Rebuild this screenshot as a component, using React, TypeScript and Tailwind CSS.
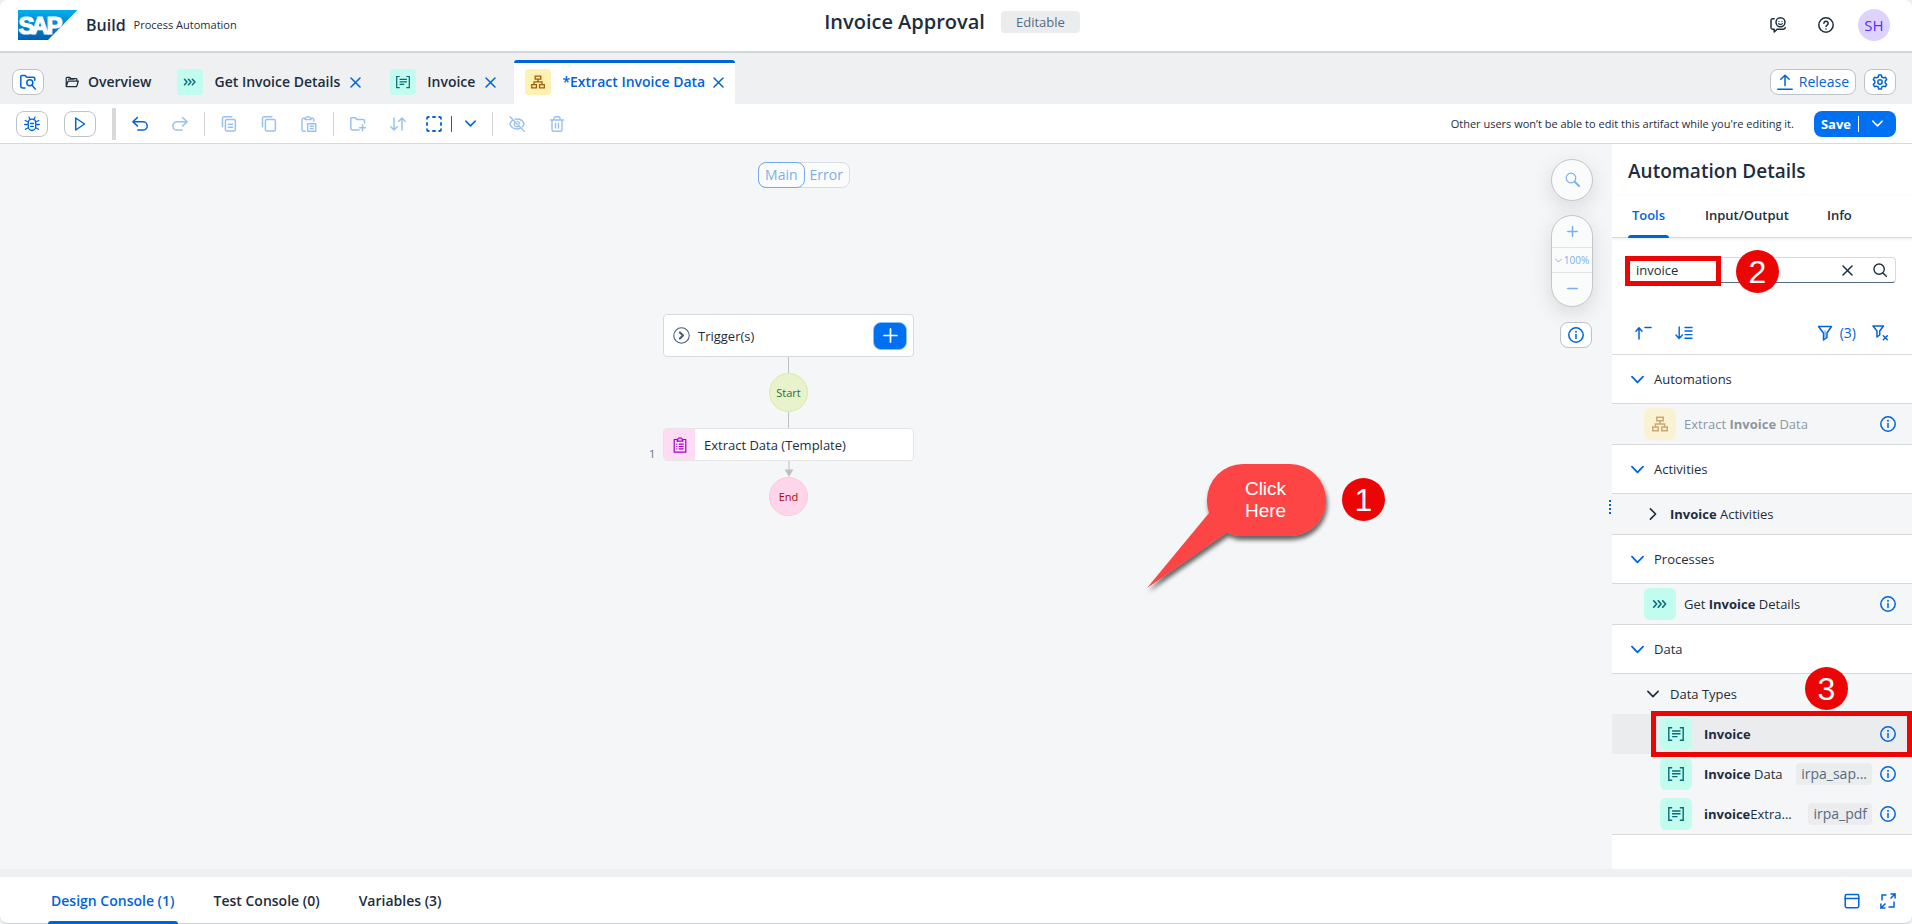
import type { ReactNode } from "react";

type IconProps = { children: ReactNode; className?: string; box?: string; width?: number };

function Icon({ children, className = "size-4", box = "0 0 16 16", width = 1.5 }: IconProps) {
  return (
    <svg
      viewBox={box}
      className={`shrink-0 ${className}`}
      fill="none"
      stroke="currentColor"
      strokeWidth={width}
      strokeLinecap="round"
      strokeLinejoin="round"
      aria-hidden="true"
    >
      {children}
    </svg>
  );
}

const InfoIcon = () => (
  <Icon>
    <circle cx="8" cy="8" r="7.2" />
    <path d="M8 7.6v4" />
    <path d="M8 4.7v.2" strokeWidth="1.8" />
  </Icon>
);

const CloseIcon = () => (
  <Icon className="size-[11px]" box="0 0 11 11">
    <path d="M1 1l9 9M10 1l-9 9" />
  </Icon>
);

const ProcessIcon = () => (
  <Icon width={1.7}>
    <path d="M1.7 4.8L4.6 8l-2.9 3.2M6.2 4.8L9.1 8l-2.9 3.2M10.7 4.8L13.6 8l-2.9 3.2" />
  </Icon>
);

const DataTypeIcon = () => (
  <Icon width={1.4}>
    <path
      d="M3.5 1.7H.8v12.6h2.7M12.5 1.7h2.7v12.6h-2.7M4.8 5h7M4.8 7.8h7M4.8 10.6h4"
      strokeLinecap="square"
      strokeLinejoin="miter"
    />
  </Icon>
);

const HierarchyIcon = () => (
  <Icon width={1.5}>
    <path d="M4.8 1.2h6.4v3.6H4.8zM.8 11h5.4v3.8H.8zM9.8 11h5.4v3.8H9.8zM8 4.8v3M3.4 11V7.9h9.2V11" strokeLinejoin="miter" />
  </Icon>
);

const ChevronDown = ({ className = "size-3" }: { className?: string }) => (
  <Icon className={className} box="0 0 12 12" width={1.6}>
    <path d="M.9 3.4L6 8.6l5.1-5.2" />
  </Icon>
);

function SapLogo() {
  return (
    <svg viewBox="0 0 60 30" className="h-[30px] w-[60px] shrink-0" role="img" aria-label="SAP">
      <defs>
        <linearGradient id="sapBlue" x1="0" y1="0" x2="0" y2="1">
          <stop offset="0" stopColor="#00aeef" />
          <stop offset="1" stopColor="#005fb0" />
        </linearGradient>
      </defs>
      <path d="M0 0h59.5L30 30H0z" fill="url(#sapBlue)" />
      <text
        y="23.5"
        x="0.5 13.2 28.5"
        fill="#fff"
        stroke="#fff"
        strokeWidth="1.2"
        fontSize="24"
        fontWeight="700"
        fontFamily="'Liberation Sans', sans-serif"
      >
        SAP
      </text>
    </svg>
  );
}

const frame = "flex items-center justify-center rounded-lg border border-[#bcc3ca] bg-white text-[#0064d9]";

function Tab({ icon, tint, label, active }: { icon: ReactNode; tint: string; label: string; active?: boolean }) {
  return (
    <div
      className={
        active
          ? "flex items-center gap-2 rounded-t-[3px] border-t-[3px] border-[#0064d9] bg-white px-[11px] pb-[3px] text-[#0064d9]"
          : "flex items-center gap-[10px] px-[11px] text-[#1d2d3e]"
      }
    >
      <button type="button" className="flex items-center gap-[11px] font-semibold">
        <span className={`flex size-[26px] items-center justify-center rounded ${tint}`}>
          <span className="flex *:size-[14px]">{icon}</span>
        </span>
        {label}
      </button>
      <button type="button" aria-label={`Close ${label}`} className="text-[#0064d9]">
        <CloseIcon />
      </button>
    </div>
  );
}

function ToolButton({ label, children, enabled }: { label: string; children: ReactNode; enabled?: boolean }) {
  return (
    <button
      type="button"
      aria-label={label}
      disabled={!enabled}
      className="flex size-4 items-center justify-center text-[#0064d9] disabled:text-[#99c1f0]"
    >
      {children}
    </button>
  );
}

const Divider = () => <span className="h-6 w-px bg-[#d0d3d6]" />;

function Section({ title, children }: { title: string; children: ReactNode }) {
  return (
    <section>
      <button
        type="button"
        className="flex h-[49px] w-full items-center gap-[10px] border-b border-[#d9d9d9] bg-white pl-[19px] text-left"
      >
        <span className="text-[#0064d9]">
          <ChevronDown className="size-[13px]" />
        </span>
        {title}
      </button>
      <div className="border-b border-[#d9d9d9] bg-[#f5f6f7]">{children}</div>
    </section>
  );
}

const InfoButton = ({ label }: { label: string }) => (
  <button type="button" aria-label={`About ${label}`} className="shrink-0 text-[#0064d9]">
    <InfoIcon />
  </button>
);

function DataRow({ name, children, tag, selected }: { name: string; children: ReactNode; tag?: string; selected?: boolean }) {
  return (
    <li className={`flex h-10 items-center gap-2 pr-4 pl-12 ${selected ? "bg-[#eaecee]" : ""}`}>
      <span className="flex size-8 shrink-0 items-center justify-center rounded-md bg-[#c2fcee] text-[#046c7a]">
        <DataTypeIcon />
      </span>
      <span className="ml-1 flex-1 whitespace-nowrap">{children}</span>
      {tag && <span className="shrink-0 rounded bg-[#eaecee] px-[5px] text-[14px] leading-[22px] text-[#556b82]">{tag}</span>}
      <InfoButton label={name} />
    </li>
  );
}

const Marker = ({ n, className }: { n: number; className: string }) => (
  <span
    className={`absolute z-20 flex size-[43px] items-center justify-center rounded-full bg-[#eb0505] pt-px font-['Liberation_Sans',sans-serif] text-[32px] leading-none text-white ${className}`}
  >
    {n}
  </span>
);

export default function App() {
  return (
    <div className="flex min-h-screen flex-col bg-[#eff0f2] font-['Open_Sans','Noto_Sans',sans-serif] text-[13px] leading-5 text-[#1d2d3e]">
      <header className="relative flex h-[53px] items-center justify-between rounded-t-lg border-b-2 border-[#d3d7db] bg-white pr-[22px] pb-px pl-[18px]">
        <div className="flex items-center">
          <SapLogo />
          <span className="ml-2 text-base font-semibold">Build</span>
          <span className="ml-2 text-[11px]">Process Automation</span>
        </div>
        <div className="absolute inset-x-0 top-[11px] flex items-center justify-center gap-4 pr-2">
          <h1 className="text-xl leading-[22px] font-semibold">Invoice Approval</h1>
          <span className="rounded bg-[#eaecee] px-[15px] leading-[22px] text-[#556b82]">Editable</span>
        </div>
        <div className="relative flex items-center">
          <button type="button" aria-label="Give feedback">
            <Icon>
              <path d="M4.2 1.8H2.6A1.6 1.6 0 0 0 1 3.4v7.2a1.6 1.6 0 0 0 1.6 1.6h1.6V15l3-2.800h6.400A1.6 1.6 0 0 0 15.200 10.600" />
              <circle cx="10.5" cy="5.3" r="4.5" />
              <path d="M9 4.500v.1M12 4.500v.1M8.600 6.600c1 1.100 2.800 1.100 3.800 0" strokeWidth="1.2" />
            </Icon>
          </button>
          <button type="button" aria-label="Help" className="ml-8">
            <Icon>
              <circle cx="8" cy="8" r="7.2" />
              <path d="M5.900 6.300a2.100 2.100 0 1 1 3.200 1.800c-.8.500-1.100.8-1.100 1.500M8 12v.1" />
            </Icon>
          </button>
          <button
            type="button"
            aria-label="Account"
            className="ml-6 size-8 rounded-full bg-[#ded3ff] text-[15px] font-medium text-[#552cff]"
          >
            SH
          </button>
        </div>
      </header>

      <div className="flex h-[51px] items-stretch justify-between pr-4 pl-3">
        <div className="flex pt-[7px]">
          <button type="button" aria-label="Browse artifacts" className={`${frame} h-[26px] w-8 self-center`}>
            <Icon>
              <path d="M5 14H2.800A2 2 0 0 1 .8 12V2.600a1 1 0 0 1 1-1h3.400L6.900 3.200h6.300a1.600 1.600 0 0 1 1.600 1.600v1.400" />
              <circle cx="9.8" cy="8.8" r="3" />
              <path d="M12 11.200l3.300 3.800" />
            </Icon>
          </button>
          <nav aria-label="Open artifacts" className="flex gap-[7px] text-[14px]">
            <a href="#overview" className="ml-[21px] flex items-center gap-[9px] pr-2 font-semibold">
              <Icon className="size-[14px]" width={1.4}>
                <path d="M1.400 13.200V3.600a.9.9 0 0 1 .9-.9h3.200l1.400 1.500h5.800a.9.9 0 0 1 .9.9v1.600M1.400 13.200L3.600 6.900h11.700l-2 6.300zM4 4.800h6" />
              </Icon>
              Overview
            </a>
            <Tab icon={<ProcessIcon />} tint="bg-[#c2fcee] text-[#046c7a]" label="Get Invoice Details" />
            <Tab icon={<DataTypeIcon />} tint="bg-[#c2fcee] text-[#046c7a]" label="Invoice" />
            <Tab icon={<HierarchyIcon />} tint="bg-[#fff0b3] text-[#a45d00]" label="*Extract Invoice Data" active />
          </nav>
        </div>
        <div className="flex items-center gap-2 pt-[7px]">
          <button type="button" className={`${frame} h-[26px] gap-[6px] px-[6px] text-[14px]`}>
            <Icon>
              <path d="M8 11.500V1.300M3.800 5.300L8 1.200l4.200 4.100M.8 15.200h14.400" />
            </Icon>
            Release
          </button>
          <button type="button" aria-label="Settings" className={`${frame} h-[26px] w-8`}>
            <Icon>
              <path d="M6.700 1h2.600l.5 2 1.600.9 2-.6 1.300 2.300L13.200 7v2l1.500 1.400-1.300 2.300-2-.6-1.600.9-.5 2H6.700l-.5-2-1.600-.9-2 .6-1.300-2.300L2.800 9V7L1.300 5.600l1.300-2.300 2 .6 1.600-.9z" />
              <circle cx="8" cy="8" r="2.2" />
            </Icon>
          </button>
        </div>
      </div>

      <div className="flex h-10 items-center justify-between border-b border-[#d9d9d9] bg-white px-4">
        <div role="toolbar" aria-label="Automation" className="flex items-center">
          <button type="button" aria-label="Debug" className={`${frame} h-[26px] w-8`}>
            <Icon width={1.3}>
              <path d="M8 3.200c-2.600 0-3.700 1.500-3.700 3.500v3.600c0 2.300 1.600 4.200 3.700 4.200s3.700-1.900 3.700-4.200V6.700c0-2-1.100-3.500-3.700-3.500zM6 3.200L5 1.200M10 3.200l1-2M4.300 6L1.200 4.500M11.700 6l3.100-1.500M4.300 8.500H.7M11.700 8.500h3.600M4.500 11.500l-3 1.800M11.500 11.500l3 1.800M6.600 7.500h2.800M6.600 10.300h2.800" />
            </Icon>
          </button>
          <button type="button" aria-label="Run" className={`${frame} ml-4 h-[26px] w-8`}>
            <Icon>
              <path d="M3.700 2v12l8.800-6z" />
            </Icon>
          </button>
          <span className="ml-4 h-8 w-1 bg-[#d9d9d9]" />
          <div className="ml-4 flex items-center gap-6">
            <ToolButton label="Undo" enabled>
              <Icon>
                <path d="M5.300 1.600L.9 5.700l4.400 4.200M1 5.700h10a3.900 3.900 0 0 1 0 8.400H5.800" />
              </Icon>
            </ToolButton>
            <ToolButton label="Redo">
              <Icon>
                <path d="M10.700 1.600l4.400 4.100-4.400 4.200M15 5.700H5a3.900 3.900 0 0 0 0 8.400h5.200" />
              </Icon>
            </ToolButton>
          </div>
          <div className="ml-4 flex items-center gap-4">
            <Divider />
            <div className="flex items-center gap-6">
              <ToolButton label="Duplicate">
                <Icon>
                  <path d="M1.500 10.500V2.400A1.600 1.600 0 0 1 3.100.8h7.700M6 3.500h6.800a1.600 1.600 0 0 1 1.600 1.600v8.400a1.600 1.600 0 0 1-1.600 1.600H6a1.600 1.600 0 0 1-1.600-1.600V5.100A1.600 1.600 0 0 1 6 3.500zM7.300 8.200h4.300M7.300 11.300h4.300" />
                </Icon>
              </ToolButton>
              <ToolButton label="Copy">
                <Icon>
                  <path d="M1.500 10.500V2.400A1.600 1.600 0 0 1 3.100.8h7.700M6 3.500h6.800a1.600 1.600 0 0 1 1.600 1.600v8.400a1.600 1.600 0 0 1-1.600 1.600H6a1.600 1.600 0 0 1-1.600-1.600V5.100A1.600 1.600 0 0 1 6 3.500z" />
                </Icon>
              </ToolButton>
              <ToolButton label="Paste">
                <Icon width={1.4}>
                  <path d="M4.200 15.200H2.500A1.500 1.500 0 0 1 1 13.700V3.800a1.500 1.500 0 0 1 1.500-1.500H4M9.800 2.300h1.500a1.500 1.500 0 0 1 1.500 1.500v1.400M4 3.600h6L9.400 2A2.500 2.500 0 0 0 7 .8 2.500 2.500 0 0 0 4.600 2zM6.600 7.700h8.200v7.500H6.600zM9 10.300h3.400M9 12.600h3.400" />
                </Icon>
              </ToolButton>
            </div>
            <Divider />
            <div className="flex items-center gap-6">
              <ToolButton label="Add to folder">
                <Icon>
                  <path d="M9 14H2.800A2 2 0 0 1 .8 12V2.800a1 1 0 0 1 1-1h3.400l1.700 1.600h6a1.600 1.600 0 0 1 1.600 1.600V7M12.500 8.700v6M9.500 11.700h6" />
                </Icon>
              </ToolButton>
              <ToolButton label="Reorder">
                <Icon>
                  <path d="M4 2v11.800M.8 10.700L4 14l3.200-3.300M12 14V2.200M8.800 5.300L12 2l3.200 3.300" />
                </Icon>
              </ToolButton>
            </div>
            <div className="ml-1 flex items-center">
              <button type="button" aria-label="Select" className="text-[#0064d9]">
                <Icon width={1.8}>
                  <path
                    d="M1 3.500V2.300C1 1.500 1.500 1 2.300 1h1.200M6.300 1h3.400M12.500 1h1.200c.8 0 1.300.5 1.300 1.300v1.200M15 6.300v3.400M15 12.500v1.200c0 .8-.5 1.300-1.300 1.300h-1.200M9.700 15H6.300M3.500 15H2.300C1.500 15 1 14.500 1 13.700v-1.200M1 9.700V6.300"
                    strokeLinecap="butt"
                  />
                </Icon>
              </button>
              <span className="ml-[9px] h-4 w-px bg-[#0064d9]" />
              <button type="button" aria-label="Selection mode" className="ml-[13px] text-[#0064d9]">
                <ChevronDown className="size-[11px]" />
              </button>
            </div>
            <Divider />
            <div className="flex items-center gap-6">
              <ToolButton label="Hide">
                <Icon width={1.4}>
                  <path d="M3.800 4.200C2.300 5.200 1.300 6.700.8 8c1.200 3 4 5 7.200 5 1.300 0 2.400-.3 3.400-.8M6.200 3.200c.6-.1 1.200-.2 1.800-.2 3.200 0 6 2 7.200 5-.4 1-1.100 2-1.900 2.800M6 6.500a2.600 2.600 0 0 0 3.600 3.700M8.500 5.400A2.600 2.600 0 0 1 10.600 7.700M1 .8l14.200 14.400" />
                </Icon>
              </ToolButton>
              <ToolButton label="Delete">
                <Icon width={1.4}>
                  <path d="M1.500 4h13M5 4V2.300A1.500 1.500 0 0 1 6.500.8h3A1.500 1.500 0 0 1 11 2.300V4M3 4v9.700a1.500 1.500 0 0 0 1.500 1.500h7a1.500 1.500 0 0 0 1.500-1.500V4M6.500 7.300v4.700M9.500 7.300v4.700" />
                </Icon>
              </ToolButton>
            </div>
          </div>
        </div>
        <div className="flex items-center gap-5">
          <p className="text-[11px]">Other users won’t be able to edit this artifact while you're editing it.</p>
          <div className="flex h-[26px] items-center rounded-lg bg-[#0070f2] text-white">
            <button type="button" className="px-[7px] font-bold">
              Save
            </button>
            <span className="h-4 w-px bg-white" />
            <button type="button" aria-label="Save options" className="px-[13px]">
              <ChevronDown className="size-[11px]" />
            </button>
          </div>
        </div>
      </div>

      <div className="flex flex-1">
        <main className="relative flex-1 bg-[#f5f6f7] pt-[18px]">
          <div className="flex justify-center pr-1 text-[#7eaeea]">
            <div className="flex rounded-lg border border-[#d8dde3] bg-[#fafcfc]">
              <button
                type="button"
                aria-pressed="true"
                className="-m-px h-[26px] rounded-lg border border-[#73a9ec] px-[6px] text-[14px]"
              >
                Main
              </button>
              <button type="button" aria-pressed="false" className="px-[6px] text-[14px]">
                Error
              </button>
            </div>
          </div>

          <div className="absolute top-[170px] left-[663px] flex w-[251px] flex-col items-center">
            <div className="flex h-[43px] w-full items-center rounded border border-[#d9d9d9] bg-white pr-[6px] pl-[9px]">
              <span className="text-[#475e75]">
                <Icon className="size-[17px]" width={1}>
                  <circle cx="8" cy="8" r="7.3" />
                  <path d="M6.500 5.100L9.400 8l-2.900 2.900" strokeWidth="2" />
                </Icon>
              </span>
              <span className="ml-2 flex-1">Trigger(s)</span>
              <button
                type="button"
                aria-label="Add trigger"
                className="flex h-7 w-[34px] items-center justify-center rounded-lg border border-[#89bdf7] bg-[#0070f2] text-white"
              >
                <Icon width={1.8} className="size-[15px]">
                  <path d="M8 1v14M1 8h14" />
                </Icon>
              </button>
            </div>
            <span className="h-4 w-px bg-[#bfbfbf]" />
            <span className="flex size-[39px] items-center justify-center rounded-full border border-[#dceaa6] bg-[#e9f3cb] text-[11px] text-[#256f3a]">
              Start
            </span>
            <span className="h-4 w-px bg-[#bfbfbf]" />
            <div className="relative flex h-[33px] w-full items-center rounded border border-[#e3e5e7] bg-white">
              <span className="absolute top-[15px] -left-[15px] text-[11px] text-[#6a7480]">1</span>
              <span className="flex h-full w-[31px] items-center justify-center rounded-l-[3px] bg-[#ffdcf3] text-[#a100c2]">
                <Icon width={1.2}>
                  <path d="M5 2.500H2.200v12.700h11.600V2.500H11M5 4.200h6L10.200 2A2.400 2.400 0 0 0 8 .8 2.400 2.400 0 0 0 5.800 2zM7.200 7.200h4M7.200 9.500h4M7.200 11.800h4M4.700 7.200h.2M4.700 9.500h.2M4.700 11.800h.2" />
                </Icon>
              </span>
              <span className="ml-[9px]">Extract Data (Template)</span>
            </div>
            <svg viewBox="0 0 10 16" className="h-4 w-[10px]" aria-hidden="true">
              <path d="M5 0v9" stroke="#bfbfbf" />
              <path d="M.6 8.500h8.800L5 16z" fill="#bfbfbf" />
            </svg>
            <span className="flex size-[39px] items-center justify-center rounded-full border border-[#ffc6e0] bg-[#ffd5e9] text-[11px] text-[#aa0808]">
              End
            </span>
          </div>

          <div className="absolute top-[15px] right-[19px] flex w-[42px] flex-col items-end text-[#7eaeea]">
            <button
              type="button"
              aria-label="Search canvas"
              className="flex size-[42px] items-center justify-center rounded-full border border-[#c3c7cb] bg-[#fafcfc] shadow-[0_6px_20px_rgba(34,53,72,0.14)]"
            >
              <Icon width={1.2}>
                <circle cx="7" cy="6" r="4.8" />
                <path d="M10.600 9.600l4.400 4.400" strokeWidth="2" />
              </Icon>
            </button>
            <div className="mt-[14px] flex h-[92px] w-[42px] flex-col rounded-full border border-[#c3c7cb] bg-[#fafcfc] shadow-[0_6px_20px_rgba(34,53,72,0.14)]">
              <button type="button" aria-label="Zoom in" className="flex flex-1 items-center justify-center">
                <Icon className="size-[11px]" box="0 0 11 11">
                  <path d="M5.500.7v9.600M.7 5.500h9.600" />
                </Icon>
              </button>
              <button
                type="button"
                aria-label="Zoom level"
                className="flex h-[26px] items-center justify-center gap-[2px] border-y border-[#e2e5e8] text-[10px]"
              >
                <ChevronDown className="size-[7px]" />
                100%
              </button>
              <button type="button" aria-label="Zoom out" className="flex flex-1 items-center justify-center pb-[2px]">
                <Icon className="size-[11px]" box="0 0 11 11">
                  <path d="M.7 5.500h9.600" />
                </Icon>
              </button>
            </div>
            <button type="button" aria-label="Canvas information" className={`${frame} mt-[15px] mr-px h-[26px] w-8`}>
              <InfoIcon />
            </button>
          </div>

          <div className="absolute top-[314px] left-[1140px] h-[140px] w-[200px]">
            <svg viewBox="0 0 200 140" className="size-full" aria-hidden="true">
              <defs>
                <filter id="calloutShadow" x="-10%" y="-10%" width="125%" height="130%">
                  <feDropShadow dx="1.5" dy="4" stdDeviation="2" floodColor="#000" floodOpacity="0.6" />
                </filter>
              </defs>
              <path
                d="M103 6h47a36 36 0 0 1 36 36a36 36 0 0 1-36 36h-47a36 36 0 0 1-16-3.600L7 130 69 55a36 36 0 0 1-2-13a36 36 0 0 1 36-36z"
                fill="#fe4444"
                filter="url(#calloutShadow)"
              />
            </svg>
            <p className="absolute top-5 left-[67px] w-[117px] text-center font-['Liberation_Sans',sans-serif] text-[19px] leading-[22px] text-white">
              Click
              <br />
              Here
            </p>
          </div>
          <Marker n={1} className="top-[334px] left-[1342px]" />
          <span className="absolute top-[356px] right-px flex flex-col gap-[2px]" aria-hidden="true">
            <i className="size-[2px] bg-[#0064d9]" />
            <i className="size-[2px] bg-[#0064d9]" />
            <i className="size-[2px] bg-[#0064d9]" />
            <i className="size-[2px] bg-[#0064d9]" />
          </span>
        </main>

        <aside className="w-[300px] bg-white">
          <h2 className="flex h-[52px] items-center pt-[2px] pl-4 text-[19px] font-semibold">Automation Details</h2>
          <div
            role="tablist"
            className="flex h-[42px] border-b border-[#d9d9d9] pl-4 font-semibold shadow-[0_1px_3px_rgba(34,53,72,0.1)]"
          >
            <button type="button" role="tab" aria-selected="true" className="relative w-[41px] pb-1 text-[#0064d9]">
              Tools
              <span className="absolute inset-x-0 -bottom-px h-[3px] rounded-t-sm bg-[#0064d9]" />
            </button>
            <button type="button" role="tab" aria-selected="false" className="ml-9 pb-1">
              Input/Output
            </button>
            <button type="button" role="tab" aria-selected="false" className="ml-[38px] pb-1">
              Info
            </button>
          </div>

          <form
            className="relative mx-4 mt-[19px] flex h-[26px] items-center rounded border border-[#d5dadd] border-b-[#556b82] pr-2"
            onSubmit={(e) => e.preventDefault()}
          >
            <input
              aria-label="Search tools"
              defaultValue="invoice"
              className="w-full min-w-0 flex-1 bg-transparent pl-[7px] text-[13px] outline-none"
            />
            <button type="button" aria-label="Clear search">
              <CloseIcon />
            </button>
            <button type="submit" aria-label="Search" className="ml-5">
              <Icon className="size-[14px]" width={1.6}>
                <circle cx="7" cy="7" r="5.9" />
                <path d="M11.400 11.400l3.800 3.800" />
              </Icon>
            </button>
            <span className="pointer-events-none absolute -top-[2px] -left-1 h-[30px] w-24 border-[5px] border-[#eb0505]" />
            <Marker n={2} className="-top-2 left-[107px]" />
          </form>

          <div className="mt-7 flex h-11 items-center border-b border-[#d9d9d9] pr-6 pl-[23px] text-[#0064d9]">
            <button type="button" aria-label="Collapse all">
              <Icon className="h-4 w-[18px]" box="0 0 18 16">
                <path d="M4 14V3M1 6.200L4 2.800l3 3.400M10 2.500h6" />
              </Icon>
            </button>
            <button type="button" aria-label="Expand all" className="ml-[22px]">
              <Icon className="h-4 w-[18px]" box="0 0 18 16" width={1.4}>
                <path d="M4.200 2v11M1 10l3.200 3.400L7.400 10M10 2.500h7M10 6h7M10 9.600h7M10 13.200h7" />
              </Icon>
            </button>
            <button type="button" aria-label="Filters, 3 active" className="ml-auto flex items-center gap-[7px] text-[14px]">
              <Icon>
                <path d="M1.500 1.500h13L10 8v4.500L6.500 15V8z" />
                <path d="M8.200 6v6" strokeWidth="2" strokeOpacity="0.4" />
              </Icon>
              (3)
            </button>
            <button type="button" aria-label="Clear filters" className="ml-4">
              <Icon>
                <path d="M1 1h10.500L7.700 6v4L5 12V6zM11.300 10.700l4 4M15.300 10.700l-4 4" />
              </Icon>
            </button>
          </div>

          <Section title="Automations">
            <div className="flex h-10 items-center gap-2 pr-4 pl-8">
              <span className="flex size-8 items-center justify-center rounded-md bg-[#faf3d3] text-[#cda676]">
                <HierarchyIcon />
              </span>
              <span className="flex-1 text-[#8e969f]">
                Extract <b>Invoice</b> Data
              </span>
              <InfoButton label="Extract Invoice Data" />
            </div>
          </Section>
          <Section title="Activities">
            <button type="button" className="flex h-10 w-full items-center gap-[11px] pl-[35px] text-left">
              <span className="-rotate-90">
                <ChevronDown />
              </span>
              <span>
                <b>Invoice</b> Activities
              </span>
            </button>
          </Section>
          <Section title="Processes">
            <div className="flex h-10 items-center gap-2 pr-4 pl-8">
              <span className="flex size-8 items-center justify-center rounded-md bg-[#c2fcee] text-[#046c7a]">
                <ProcessIcon />
              </span>
              <span className="flex-1">
                Get <b>Invoice</b> Details
              </span>
              <InfoButton label="Get Invoice Details" />
            </div>
          </Section>
          <Section title="Data">
            <div className="relative">
              <button type="button" className="flex h-10 w-full items-center gap-[11px] pl-[35px] text-left">
                <ChevronDown />
                Data Types
              </button>
              <ul>
                <DataRow name="Invoice" selected>
                  <b>Invoice</b>
                </DataRow>
                <DataRow name="Invoice Data" tag="irpa_sap...">
                  <b>Invoice</b> Data
                </DataRow>
                <DataRow name="invoiceExtra..." tag="irpa_pdf">
                  <b>invoice</b>Extra...
                </DataRow>
              </ul>
              <span className="pointer-events-none absolute top-[37px] right-0 left-[39px] h-[46px] border-[5px] border-[#eb0505]" />
              <Marker n={3} className="-top-[7px] left-[193px]" />
            </div>
          </Section>
        </aside>
      </div>

      <footer className="mt-2 flex h-[47px] items-stretch justify-between rounded-b-lg border-b border-[#d0d3d6] bg-white pr-4 pl-12">
        <div role="tablist" className="flex gap-[33px] text-[14px] font-semibold">
          <button type="button" role="tab" aria-selected="true" className="relative px-[3px] pt-[2px] text-[#0064d9]">
            Design Console (1)
            <span className="absolute inset-x-0 -bottom-px h-[3px] rounded-t-sm bg-[#0064d9]" />
          </button>
          <button type="button" role="tab" aria-selected="false" className="px-[3px] pt-[2px]">
            Test Console (0)
          </button>
          <button type="button" role="tab" aria-selected="false" className="px-[3px] pt-[2px]">
            Variables (3)
          </button>
        </div>
        <div className="flex items-center gap-5 pt-[2px] text-[#0064d9]">
          <button type="button" aria-label="Dock console">
            <Icon>
              <rect x="1.2" y="1.5" width="13.6" height="13.2" rx="1.6" />
              <path d="M1.200 5.500h13.600" />
            </Icon>
          </button>
          <button type="button" aria-label="Full screen">
            <Icon>
              <path
                d="M2 7.500V2h4.500M14 8.500V14H8.500M10.500.9h4.600v4.600M15 1l-4.500 4.500M5.500 15.100H.9v-4.600M1 15l4.500-4.500"
                strokeLinecap="butt"
                strokeLinejoin="miter"
              />
            </Icon>
          </button>
        </div>
      </footer>
    </div>
  );
}
